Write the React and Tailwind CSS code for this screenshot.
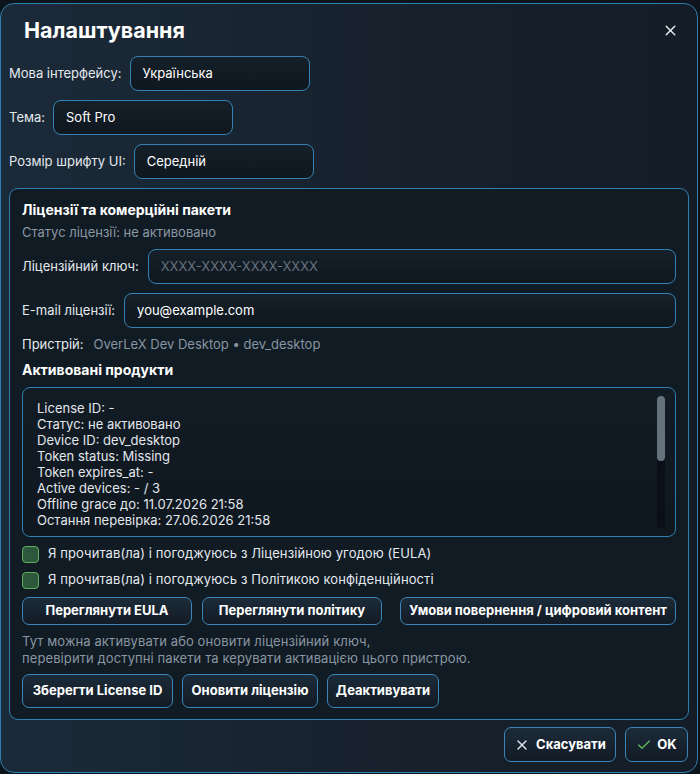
import { X, Check } from "lucide-react";

// Settings dialog: interface options + licence management panel

const fieldBase =
  "h-[35px] rounded-[8px] border border-[#3482b3] bg-gradient-to-b from-[#152029] to-[#0f171f] px-3 flex items-center text-[13px]";

const fieldCls = `${fieldBase} text-white`;

const btnCls =
  "rounded-[7px] border border-[#3a86bb] bg-gradient-to-b from-[#1c2b39] to-[#121b25] text-white font-bold text-[13px] flex items-center justify-center";

const infoLines = [
  "License ID: -",
  "Статус: не активовано",
  "Device ID: dev_desktop",
  "Token status: Missing",
  "Token expires_at: -",
  "Active devices: - / 3",
  "Offline grace до: 11.07.2026 21:58",
  "Остання перевірка: 27.06.2026 21:58",
];

const Checkbox = ({ label }) => (
  <div className="flex items-center gap-[9px] h-[18px]">
    <div className="w-[17px] h-[17px] rounded-[4px] border border-[#5fae5f] bg-[#2e583c]"></div>
    <span className="text-[13px] text-[#e4e9ee] tracking-[0.1px]">{label}</span>
  </div>
);

export default function App() {
  return (
    <div
      className="w-[700px] h-[774px] bg-[#0d141b] pt-[3px] overflow-hidden"
      style={{ fontFamily: "Inter, 'Noto Sans', sans-serif" }}
    >
      <div className="w-[698px] h-[770px] rounded-[14px] border border-[#2f7fae] bg-gradient-to-r from-[#1b2a39] via-[#17222e] to-[#141d27] px-[8px] flex flex-col">

        {/* Header */}
        <div className="h-[52px] flex items-center justify-between pl-[15px] pr-[10px]">
          <h1 className="text-[21.5px] font-bold text-white">Налаштування</h1>
          <X size={17} strokeWidth={2} className="text-[#e6ebf0]" />
        </div>

        {/* General options */}
        <div className="flex flex-col gap-[9px]">
          <div className="flex items-center gap-[8px]">
            <span className="text-[13px] text-[#e4e9ee]">Мова інтерфейсу:</span>
            <div className={`${fieldCls} w-[180px]`}>Українська</div>
          </div>
          <div className="flex items-center gap-[8px]">
            <span className="text-[13px] text-[#e4e9ee]">Тема:</span>
            <div className={`${fieldCls} w-[180px]`}>Soft Pro</div>
          </div>
          <div className="flex items-center gap-[8px]">
            <span className="text-[13px] text-[#e4e9ee]">Розмір шрифту UI:</span>
            <div className={`${fieldCls} w-[180px]`}>Середній</div>
          </div>
        </div>

        {/* Licence group */}
        <div className="mt-[9px] w-[680px] rounded-[9px] border border-[#2f7fae] bg-[#111b24] pl-[12px] pr-[12px] pt-[10px] pb-[11px] flex flex-col">
          <div className="h-[20px] flex items-center text-[14px] font-bold text-white">
            Ліцензії та комерційні пакети
          </div>
          <div className="mt-[4px] h-[20px] flex items-center text-[13px] text-[#8b97a3]">
            Статус ліцензії: не активовано
          </div>

          <div className="mt-[6px] flex items-center gap-[9px]">
            <span className="text-[13px] text-[#e4e9ee] whitespace-nowrap">Ліцензійний ключ:</span>
            <div className={`${fieldBase} flex-1 text-[#66727e]`}>XXXX-XXXX-XXXX-XXXX</div>
          </div>
          <div className="mt-[9px] flex items-center gap-[9px]">
            <span className="text-[13px] text-[#e4e9ee] whitespace-nowrap">E-mail ліцензії:</span>
            <div className={`${fieldCls} flex-1`}>you@example.com</div>
          </div>

          <div className="mt-[7px] h-[20px] flex items-center gap-[10px] text-[13px]">
            <span className="text-[#e4e9ee]">Пристрій:</span>
            <span className="text-[#8795a2]">OverLeX Dev Desktop • dev_desktop</span>
          </div>
          <div className="mt-[4px] h-[20px] flex items-center text-[14px] font-bold text-white">
            Активовані продукти
          </div>

          {/* Activation info box */}
          <div className="mt-[8px] h-[150px] rounded-[8px] border border-[#2f7fae] bg-gradient-to-b from-[#121c25] to-[#0f171f] flex">
            <div className="flex-1 pl-[14px] pt-[12px] text-[13px] leading-[16px] text-[#e2e7ec]">
              {infoLines.map((line) => (
                <div key={line}>{line}</div>
              ))}
            </div>
            <div className="w-[8px] mr-[10px] mt-[8px] mb-[8px] rounded-[4px] bg-[#0a0f17] flex flex-col">
              <div className="h-[65px] rounded-[4px] bg-[#66737d]"></div>
            </div>
          </div>

          <div className="mt-[8px] flex flex-col gap-[8px]">
            <Checkbox label="Я прочитав(ла) і погоджуюсь з Ліцензійною угодою (EULA)" />
            <Checkbox label="Я прочитав(ла) і погоджуюсь з Політикою конфіденційності" />
          </div>

          <div className="mt-[8px] flex gap-[10px]">
            <button className={`${btnCls} h-[28px] w-[170px]`}>Переглянути EULA</button>
            <button className={`${btnCls} h-[28px] w-[180px]`}>Переглянути політику</button>
            <button className={`${btnCls} h-[28px] w-[276px] ml-[8px]`}>Умови повернення / цифровий контент</button>
          </div>

          <p className="mt-[8px] text-[13px] leading-[17px] text-[#8a96a2] tracking-[0.1px]">
            Тут можна активувати або оновити ліцензійний ключ,
            <br />
            перевірити доступні пакети та керувати активацією цього пристрою.
          </p>

          <div className="mt-[7px] flex gap-[9px]">
            <button className={`${btnCls} h-[34px] w-[151px]`}>Зберегти License ID</button>
            <button className={`${btnCls} h-[34px] w-[136px]`}>Оновити ліцензію</button>
            <button className={`${btnCls} h-[34px] w-[112px]`}>Деактивувати</button>
          </div>
        </div>

        {/* Footer */}
        <div className="mt-[7px] flex justify-end gap-[9px] pr-[1px]">
          <button className={`${btnCls} h-[35px] w-[112px] gap-[6px]`}>
            <X size={16} strokeWidth={2} className="text-[#dfe5ea]" />
            Скасувати
          </button>
          <button className={`${btnCls} h-[35px] w-[63px] gap-[5px]`}>
            <Check size={16} strokeWidth={2} className="text-[#5cb85c]" />
            OK
          </button>
        </div>
      </div>
    </div>
  );
}
